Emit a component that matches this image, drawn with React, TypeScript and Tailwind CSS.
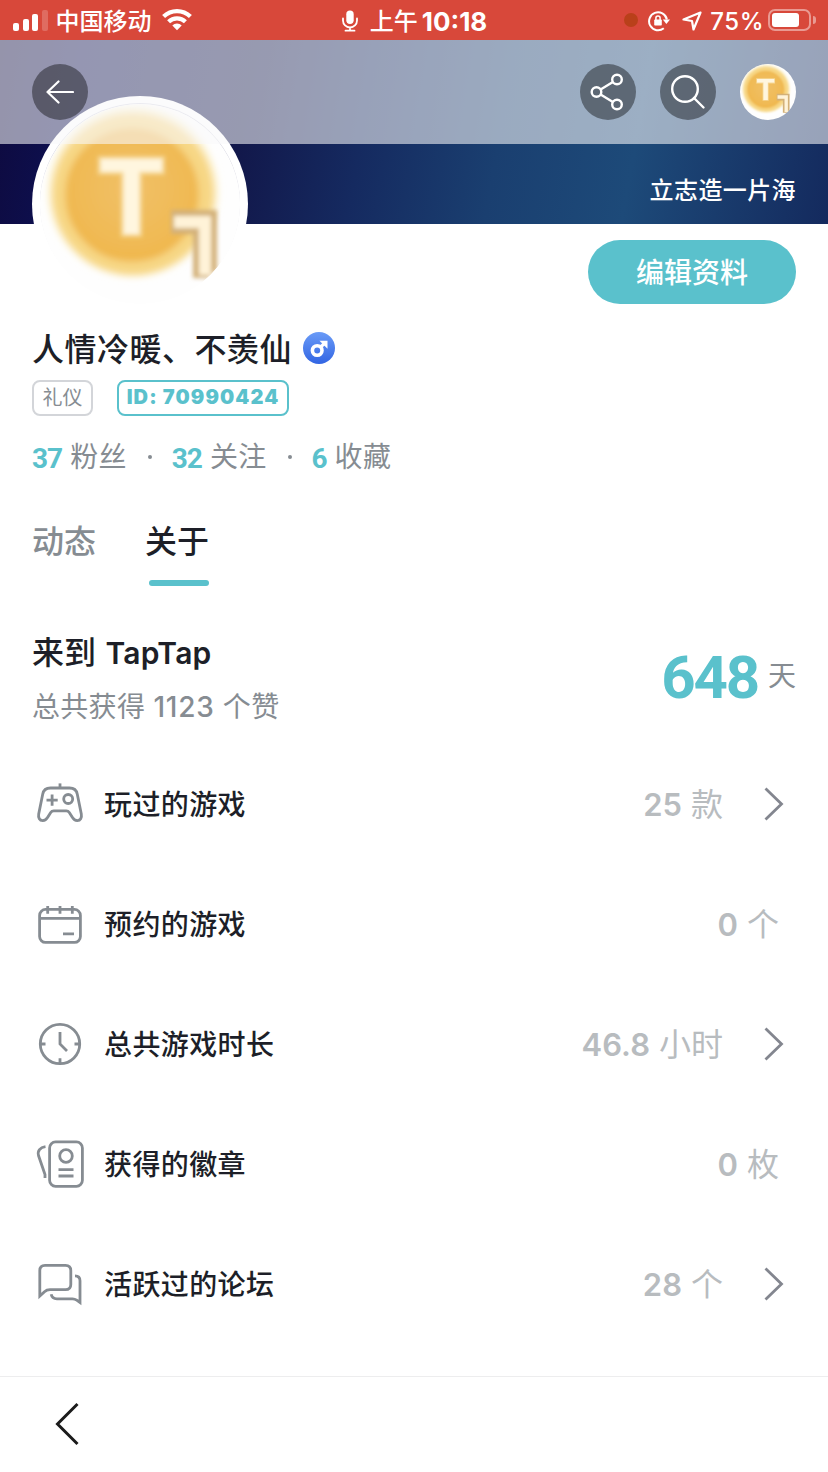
import React from "react";

type IconProps = { className?: string };

type InfoRow = {
  label: string;
  count: string;
  unit: string;
  icon: React.ReactNode;
  link?: boolean;
};

// coin avatar, used in the header and in the profile block
const CoinAvatar = ({ id, className }: { id: string; className?: string }) => (
  <svg viewBox="0 0 200 200" className={className}>
    <defs>
      <radialGradient id={`${id}-face`} cx="50%" cy="45%" r="60%">
        <stop offset="0%" stopColor="#f1c067" />
        <stop offset="70%" stopColor="#f0ba55" />
        <stop offset="100%" stopColor="#f0b548" />
      </radialGradient>
      <filter id={`${id}-soft`} x="-10%" y="-10%" width="120%" height="120%">
        <feGaussianBlur stdDeviation="3.5" />
      </filter>
      <filter id={`${id}-edge`} x="-20%" y="-20%" width="140%" height="140%">
        <feGaussianBlur stdDeviation="2" />
      </filter>
      <clipPath id={`${id}-clip`}>
        <circle cx="100" cy="100" r="100" />
      </clipPath>
    </defs>
    <g clipPath={`url(#${id}-clip)`}>
      <rect width="200" height="200" fill="#fefefe" />
      <g filter={`url(#${id}-soft)`}>
        <circle cx="93" cy="88" r="85" fill="#fdf3cf" />
        <circle cx="93" cy="90" r="81" fill="#f7d785" />
        <circle cx="92" cy="91" r="66" fill={`url(#${id}-face)`} />
        <circle cx="92" cy="91" r="65" fill="none" stroke="#efb648" strokeWidth="3" />
      </g>
      <g filter={`url(#${id}-edge)`}>
        <text
          x="91.5"
          y="130"
          textAnchor="middle"
          fontFamily="Inter, sans-serif"
          fontWeight="700"
          fontSize="103"
          fill="#fff6df"
          stroke="#f6d793"
          strokeWidth="6"
          paintOrder="stroke"
        >
          T
        </text>
        <path d="M131 106h46v60l-9 8h-15v-44h-22z" fill="#d3b179" />
        <path d="M134 112h37v59h-12v-47h-25z" fill="#fff3d8" />
      </g>
    </g>
  </svg>
);

const WifiGlyph = ({ className }: IconProps) => (
  <svg viewBox="0 0 30 23" className={className} fill="none" stroke="white" strokeWidth="4.2">
    <path d="M1.6 8.6a19 19 0 0 1 26.8 0" />
    <path d="M6.6 13.8a12 12 0 0 1 16.8 0" />
    <path d="M10.3 17.4a6.6 6.6 0 0 1 9.4 0L15 22.2z" fill="white" stroke="none" />
  </svg>
);

const MicGlyph = ({ className }: IconProps) => (
  <svg viewBox="0 0 16 22" className={className} fill="none" stroke="white" strokeWidth="1.8" strokeLinecap="round">
    <rect x="4.3" y="0.5" width="7.4" height="13.5" rx="3.7" fill="white" stroke="none" />
    <path d="M1 8.5v2a7 7 0 0 0 14 0v-2M8 17.5v3M3.5 20.7h9" />
  </svg>
);

const RotationLock = ({ className }: IconProps) => (
  <svg viewBox="0 0 22 22" className={className} fill="none" stroke="white" strokeWidth="2">
    <path d="M15.8 18.3A9 9 0 1 1 18.9 9.5" />
    <path d="M14.8 9.5H22l-3.6 4.6z" fill="white" stroke="none" />
    <rect x="6.2" y="9.5" width="7.6" height="6" rx="0.8" fill="white" stroke="none" />
    <path d="M7.9 10V8a2.1 2.1 0 0 1 4.2 0v2" strokeWidth="1.5" />
  </svg>
);

const GamepadIcon = () => (
  <svg viewBox="0 0 48 48" className="h-12 w-12" fill="none" stroke="#868c92" strokeWidth="2.8">
    <path d="M24 3.4v4.8" />
    <path d="M14.5 8h19c4.2 0 7 2 7.8 6.2l4 19.8c.7 3.9-.9 6.6-4 6.6-2.2 0-3.7-1-4.7-2.9l-3.3-5.2c-.8-1.2-1.6-1.7-3-1.7H17.7c-1.4 0-2.2.5-3 1.7l-3.3 5.2c-1 1.9-2.5 2.9-4.7 2.9-3.1 0-4.7-2.7-4-6.6l4-19.8C7.5 10 10.3 8 14.5 8z" />
    <path d="M10.5 20.2h11.2M16.1 14.6v11.2" />
    <circle cx="32.2" cy="19" r="4.5" />
  </svg>
);

const CalendarIcon = () => (
  <svg viewBox="0 0 48 48" className="h-12 w-12" fill="none" stroke="#868c92" strokeWidth="2.8">
    <rect x="3.6" y="9.4" width="40.8" height="33" rx="6" />
    <path d="M3.5 18.3h41M11.7 6v7.8M24 6v7.8M36.3 6v7.8M27 33.8h11" />
  </svg>
);

const ClockIcon = () => (
  <svg viewBox="0 0 48 48" className="h-12 w-12" fill="none" stroke="#868c92" strokeWidth="2.8">
    <circle cx="24" cy="24" r="19.7" />
    <path d="M24 12v12l7 7M4 24h5.5M38.5 24H44M24 38.3V44" />
  </svg>
);

const BadgeIcon = () => (
  <svg viewBox="0 0 48 48" className="h-12 w-12" fill="none" stroke="#868c92" strokeWidth="2.8">
    <rect x="13.6" y="1.9" width="32.8" height="44.4" rx="6" />
    <circle cx="30" cy="16" r="6.3" />
    <path d="M22.5 29.7h15M22.5 36h15" />
    <path d="M9.5 6.6C4 7.3 1.3 11 2.5 15.5L9 34.5V38" />
  </svg>
);

const ForumIcon = () => (
  <svg viewBox="0 0 48 48" className="h-12 w-12" fill="none" stroke="#868c92" strokeWidth="2.8">
    <path d="M9 5.3h20.5c3.4 0 5.3 2 5.3 5.2v14c0 3.2-2 5.2-5.3 5.2H14c-2.3 0-4 .6-5.5 2L3.8 36V10.5C3.8 7.3 5.7 5.3 9 5.3z" />
    <path d="M39 15.8c3.2 0 5 1.8 5 5v21.7l-3.3-2.3c-1.4-1-2.5-1.4-4.2-1.4H21c-3 0-5.2-1.2-5.8-4.5" />
  </svg>
);

const RowChevron = () => (
  <svg viewBox="0 0 20 36" className="h-9 w-5 shrink-0" fill="none" stroke="#83868f" strokeWidth="2.8">
    <path d="M1.5 2.5 17.5 18l-16 15.5" />
  </svg>
);

const rows: InfoRow[] = [
  { label: "玩过的游戏", count: "25", unit: "款", icon: <GamepadIcon />, link: true },
  { label: "预约的游戏", count: "0", unit: "个", icon: <CalendarIcon /> },
  { label: "总共游戏时长", count: "46.8", unit: "小时", icon: <ClockIcon />, link: true },
  { label: "获得的徽章", count: "0", unit: "枚", icon: <BadgeIcon /> },
  { label: "活跃过的论坛", count: "28", unit: "个", icon: <ForumIcon />, link: true },
];

const stats = [
  { count: "37", label: "粉丝" },
  { count: "32", label: "关注" },
  { count: "6", label: "收藏" },
];

const StatusBar = () => (
  <div className="grid h-10 grid-cols-[1fr_auto_1fr] items-center bg-[#d8483a] pt-0.5 pr-3 pl-[13px] text-2xl leading-[38px] text-white">
    <div className="flex items-center">
      <div className="mr-2 flex h-[22px] items-end gap-[3.5px] pb-0.5">
        <span className="h-2 w-1.5 rounded-[2px] bg-white" />
        <span className="h-3 w-1.5 rounded-[2px] bg-white" />
        <span className="h-[17px] w-1.5 rounded-[2px] bg-white" />
        <span className="h-[21px] w-1.5 rounded-[2px] bg-white/20" />
      </div>
      <span className="pt-px font-medium">中国移动</span>
      <WifiGlyph className="mb-1 ml-2.5 h-[23px] w-[30px]" />
    </div>
    <div className="flex items-center">
      <MicGlyph className="mr-3 mb-0.5 h-[22px] w-4" />
      <span className="pt-px font-medium">上午</span>
      <span className="ml-1 text-[26px] font-bold">10:18</span>
    </div>
    <div className="flex items-center justify-end">
      <span className="mr-2.5 mb-1 h-3.5 w-3.5 rounded-full bg-[#b9401a]" />
      <RotationLock className="mr-3 mb-0.5 h-[22px] w-[22px]" />
      <svg viewBox="0 0 20 20" className="mr-2 mb-0.5 h-5 w-5" fill="none" stroke="white" strokeWidth="2.2" strokeLinejoin="round">
        <path d="M18.5 1.5 1.5 8.5l8.5 1.5 1.5 8.5z" />
      </svg>
      <span className="font-medium tracking-[0.5px]">75%</span>
      <div className="mb-1 ml-1 h-[22px] w-[43px] rounded-[7px] border-2 border-white/45 p-0.5">
        <div className="h-full w-[27px] rounded-[3px] bg-white" />
      </div>
      <span className="mb-1 ml-0.5 h-2 w-[3px] rounded-r-full bg-white/45" />
    </div>
  </div>
);

const Cover = () => (
  <div className="relative h-[184px] bg-[linear-gradient(100deg,#0e0a3e_0%,#0d1050_10%,#12184b_30%,#152a60_44%,#1a3f70_60%,#1d4a79_76%,#142a5e_100%)]">
    <div className="absolute top-14 left-8 z-10 h-[216px] w-[216px] rounded-full bg-white p-2">
      <CoinAvatar id="profile" className="h-full w-full rounded-full shadow-[0_-1px_0_0_rgba(100,100,140,0.25)]" />
    </div>
    {/* frosted nav bar sits over the cover and the top of the avatar */}
    <div className="absolute inset-x-0 top-0 z-20 flex h-[104px] items-center bg-[#f8f8fa]/58 px-8">
      <button className="flex h-14 w-14 items-center justify-center rounded-full bg-black/40">
        <svg viewBox="0 0 28 24" className="h-6 w-7" fill="none" stroke="white" strokeWidth="2.2" strokeLinecap="round" strokeLinejoin="round">
          <path d="M27 12H1.5M12.5 1.5 1.5 12l11 10.5" />
        </svg>
      </button>
      <div className="ml-auto flex gap-6">
        <button className="flex h-14 w-14 items-center justify-center rounded-full bg-black/40">
          <svg viewBox="0 0 36 38" className="h-[38px] w-9" fill="none" stroke="white" strokeWidth="2.4">
            <circle cx="6.5" cy="19" r="4.8" />
            <circle cx="27" cy="6.5" r="4.8" />
            <circle cx="27" cy="31.5" r="4.8" />
            <path d="m10.6 16.5 12.3-7.5M10.6 21.5l12.3 7.5" />
          </svg>
        </button>
        <button className="flex h-14 w-14 items-center justify-center rounded-full bg-black/40">
          <svg viewBox="0 0 36 36" className="h-9 w-9" fill="none" stroke="white" strokeWidth="2.4" strokeLinecap="round">
            <circle cx="15" cy="15" r="12.8" />
            <path d="m24 24 9.5 9.5" />
          </svg>
        </button>
        <CoinAvatar id="nav" className="h-14 w-14" />
      </div>
    </div>
    <div className="flex h-full items-end justify-end px-8 pb-[15px] text-2xl leading-9 font-medium tracking-[0.4px] text-white">
      立志造一片海
    </div>
  </div>
);

const App = () => {
  return (
    <div className="flex h-[1472px] w-[828px] flex-col overflow-hidden bg-white font-[Inter,'Noto_Sans_CJK_SC',sans-serif] text-[#1d1f28]">
      <StatusBar />
      <Cover />

      <div className="flex justify-end px-8 pt-4">
        <button className="h-16 w-52 rounded-full bg-[#5ac1cc] pt-0.5 text-[28px] leading-[62px] font-medium text-white">
          编辑资料
        </button>
      </div>

      <div className="mt-6 flex h-10 items-center px-8">
        <h1 className="pt-1 text-[32px] leading-10 font-medium tracking-[0.5px]">人情冷暖、不羡仙</h1>
        <svg viewBox="0 0 32 32" className="ml-[11px] h-8 w-8">
          <defs>
            <linearGradient id="male" x1="0" y1="0" x2="0" y2="1">
              <stop offset="0%" stopColor="#6a9bf7" />
              <stop offset="100%" stopColor="#3265e3" />
            </linearGradient>
          </defs>
          <circle cx="16" cy="16" r="16" fill="url(#male)" />
          <circle cx="14.2" cy="18.5" r="4.8" fill="none" stroke="white" strokeWidth="3.6" />
          <path d="m17.5 15 4-3.5" stroke="white" strokeWidth="3.2" />
          <path d="M16.5 8.8h8v8z" fill="white" />
        </svg>
      </div>

      <div className="mt-3 flex h-9 items-center gap-6 px-8">
        <span className="flex h-9 w-[61px] items-center justify-center rounded-lg border-2 border-[#d3d5d9] text-xl leading-none text-[#868c92]">
          礼仪
        </span>
        <span className="flex h-9 w-[172px] items-center justify-center rounded-lg border-2 border-[#5ac1cc] pb-0.5 text-xl leading-none font-black tracking-[1.1px] text-[#5ac1cc]">
          ID: 70990424
        </span>
      </div>

      <div className="mt-[21px] flex h-10 items-center px-8 text-[28px] leading-10 text-[#868c92]">
        {stats.map((stat, index) => (
          <React.Fragment key={stat.label}>
            {index > 0 && <span className="mr-5 ml-[21px] h-1 w-1 rounded-full bg-[#868c92]" />}
            <span className="pt-[3px] font-[Roboto,sans-serif] font-bold tracking-[-1px] text-[#5ac1cc]">{stat.count}</span>
            <span className="ml-2 tracking-[0.3px]">{stat.label}</span>
          </React.Fragment>
        ))}
      </div>

      <div className="mt-10 flex h-[69px] gap-[49px] px-8 text-[32px] leading-[50px] font-medium">
        <span className="text-[#868c92]">动态</span>
        <div className="flex flex-col items-end justify-between">
          <span>关于</span>
          <span className="h-1.5 w-[60px] rounded-full bg-[#5ac1cc]" />
        </div>
      </div>

      <div className="mt-11 flex h-[100px] items-start justify-between px-8">
        <div>
          <div className="text-[32px] leading-[46px] font-medium">
            来到 <span className="ml-px text-[30px] font-semibold tracking-[0.2px]">TapTap</span>
          </div>
          <div className="mt-2 text-[28px] leading-[46px] tracking-[0.3px] text-[#868c92]">
            总共获得 <span className="font-medium tracking-[0.8px]">1123</span> 个赞
          </div>
        </div>
        <div className="flex h-[95px] items-center">
          <span className="font-[Roboto,sans-serif] text-[60px] leading-none font-bold tracking-[-2.2px] text-[#5ac1cc]">648</span>
          <span className="ml-2.5 pb-1 text-[28px] leading-none text-[#868c92]">天</span>
        </div>
      </div>

      <div className="mt-3.5">
        {rows.map((row) => (
          <div key={row.label} className="flex h-[120px] items-center pr-11 pl-9">
            {row.icon}
            <span className="ml-5 pt-0.5 text-[28px] leading-10 font-medium tracking-[0.4px]">{row.label}</span>
            <span className={`ml-auto pt-0.5 text-[32px] leading-10 text-[#b8bcbf] ${row.link ? "mr-[41px]" : "mr-[5px]"}`}>
              <span className="text-[31px] font-semibold">{row.count}</span> {row.unit}
            </span>
            {row.link && <RowChevron />}
          </div>
        ))}
      </div>

      <div className="mt-auto flex h-24 items-center border-t border-[#ededee] pb-0.5 pl-[55px]">
        <svg viewBox="0 0 24 44" className="h-11 w-6" fill="none" stroke="#1b1b1b" strokeWidth="3">
          <path d="M22.5 2 2.5 22l20 20" />
        </svg>
      </div>
    </div>
  );
};

export default App;
